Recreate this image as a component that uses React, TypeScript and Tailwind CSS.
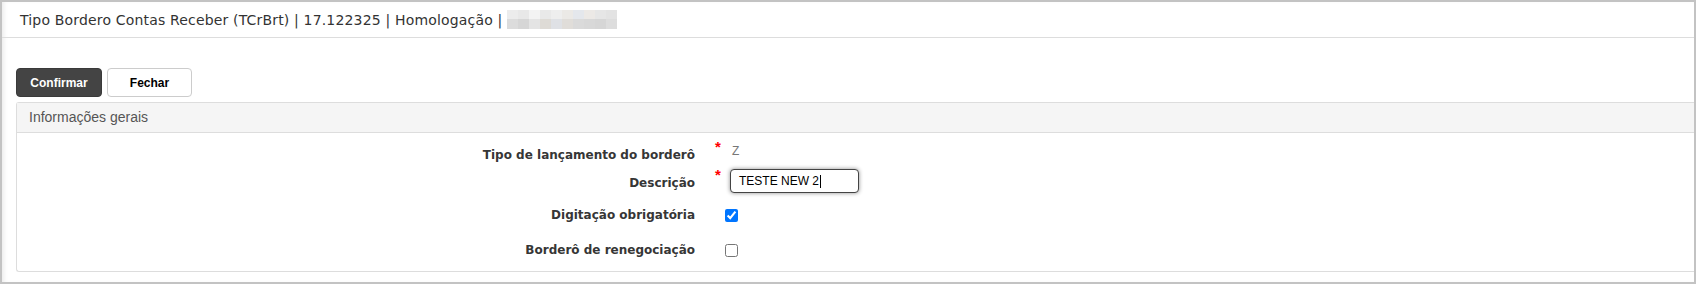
import React from "react";

const verdana = { fontFamily: '"DejaVu Sans", Verdana, sans-serif' };
const arial = { fontFamily: '"Liberation Sans", Arial, sans-serif' };

function Blurred() {
	const top = ["#ececec", "#e8e8e8", "#f3f3f3", "#e9e9e9", "#eeeeee", "#ebe9e6", "#e4e7ec", "#ece9e6", "#e6e6e6", "#e3e3e3"];
	const bottom = ["#dcdcdc", "#d6d6d6", "#e4e4e4", "#dedbd6", "#dfe1e5", "#e0ddd9", "#dadada", "#d8d8d8", "#d6d6d6", "#dddddd"];
	return (
		<div className="ml-[5px] flex h-[19px] w-[110px] flex-col">
			<div className="flex h-[9px]">
				{top.map((c, i) => (
					<div key={i} className="h-full flex-1" style={{ background: c }} />
				))}
			</div>
			<div className="flex h-[10px]">
				{bottom.map((c, i) => (
					<div key={i} className="h-full flex-1" style={{ background: c }} />
				))}
			</div>
		</div>
	);
}

function Label({ text, mt }: { text: string; mt: string }) {
	return (
		<div
			className={`w-[678px] shrink-0 text-right text-[12px] font-bold leading-[16px] text-[#363636] ${mt}`}
			style={verdana}
		>
			{text}
		</div>
	);
}

function Required({ mt }: { mt: string }) {
	return (
		<div className="w-[30px] shrink-0 pl-[20px]">
			<div className={`text-[15px] font-bold leading-[16px] text-[#ff0000] ${mt}`} style={arial}>
				*
			</div>
		</div>
	);
}

export default function App() {
	return (
		<div className="flex h-[284px] w-[1696px] flex-col border-2 border-[#c3c3c3] bg-white shadow-[inset_4px_0_4px_-2px_rgba(0,0,0,0.08)]">
			<div className="flex h-[36px] shrink-0 items-center border-b border-[#dddddd] pl-[18px]">
				<span className="text-[14px] leading-[18px] tracking-[0.17px] text-[#333333]" style={verdana}>
					Tipo Bordero Contas Receber (TCrBrt) | 17.122325 | Homologação |
				</span>
				<Blurred />
			</div>

			<div className="flex gap-[5px] pl-[14px] pt-[30px]">
				<button
					className="flex h-[29px] w-[86px] items-center justify-center rounded-[4px] border border-[#3a3a3a] bg-[#444444] text-[12px] font-bold text-white"
					style={arial}
				>
					Confirmar
				</button>
				<button
					className="flex h-[29px] w-[85px] items-center justify-center rounded-[4px] border border-[#cccccc] bg-white text-[12px] font-bold text-black"
					style={arial}
				>
					Fechar
				</button>
			</div>

			<div className="ml-[14px] mt-[5px] rounded-l-[3px] border border-r-0 border-[#dddddd]">
				<div className="flex h-[30px] items-center border-b border-[#dddddd] bg-[#f5f5f5] pl-[12px]">
					<span className="text-[14px] text-[#555555]" style={arial}>
						Informações gerais
					</span>
				</div>

				<div className="flex flex-col">
					<div className="flex h-[30px] items-start">
						<Label text="Tipo de lançamento do borderô" mt="mt-[14px]" />
						<Required mt="mt-[6px]" />
						<div className="ml-[7px] mt-[10px] text-[12px] leading-[16px] text-[#777777]" style={arial}>
							Z
						</div>
					</div>

					<div className="flex h-[36px] items-start">
						<Label text="Descrição" mt="mt-[12px]" />
						<Required mt="mt-[4px]" />
						<div className="ml-[5px] mt-[6px] flex h-[24px] w-[129px] items-center rounded-[4px] border border-[#444444] bg-white pl-[8px] shadow-[0_0_4px_rgba(0,0,0,0.45)]">
							<span className="text-[12px] text-black" style={arial}>
								TESTE NEW 2
							</span>
							<span className="ml-[1px] h-[13px] w-[1px] bg-black" />
						</div>
					</div>

					<div className="flex h-[34px] items-start">
						<Label text="Digitação obrigatória" mt="mt-[8px]" />
						<div className="w-[30px] shrink-0" />
						<input type="checkbox" defaultChecked className="mt-[10px] h-[13px] w-[13px]" />
					</div>

					<div className="flex h-[38px] items-start">
						<Label text="Borderô de renegociação" mt="mt-[9px]" />
						<div className="w-[30px] shrink-0" />
						<input type="checkbox" className="mt-[11px] h-[13px] w-[13px]" />
					</div>
				</div>
			</div>
		</div>
	);
}
